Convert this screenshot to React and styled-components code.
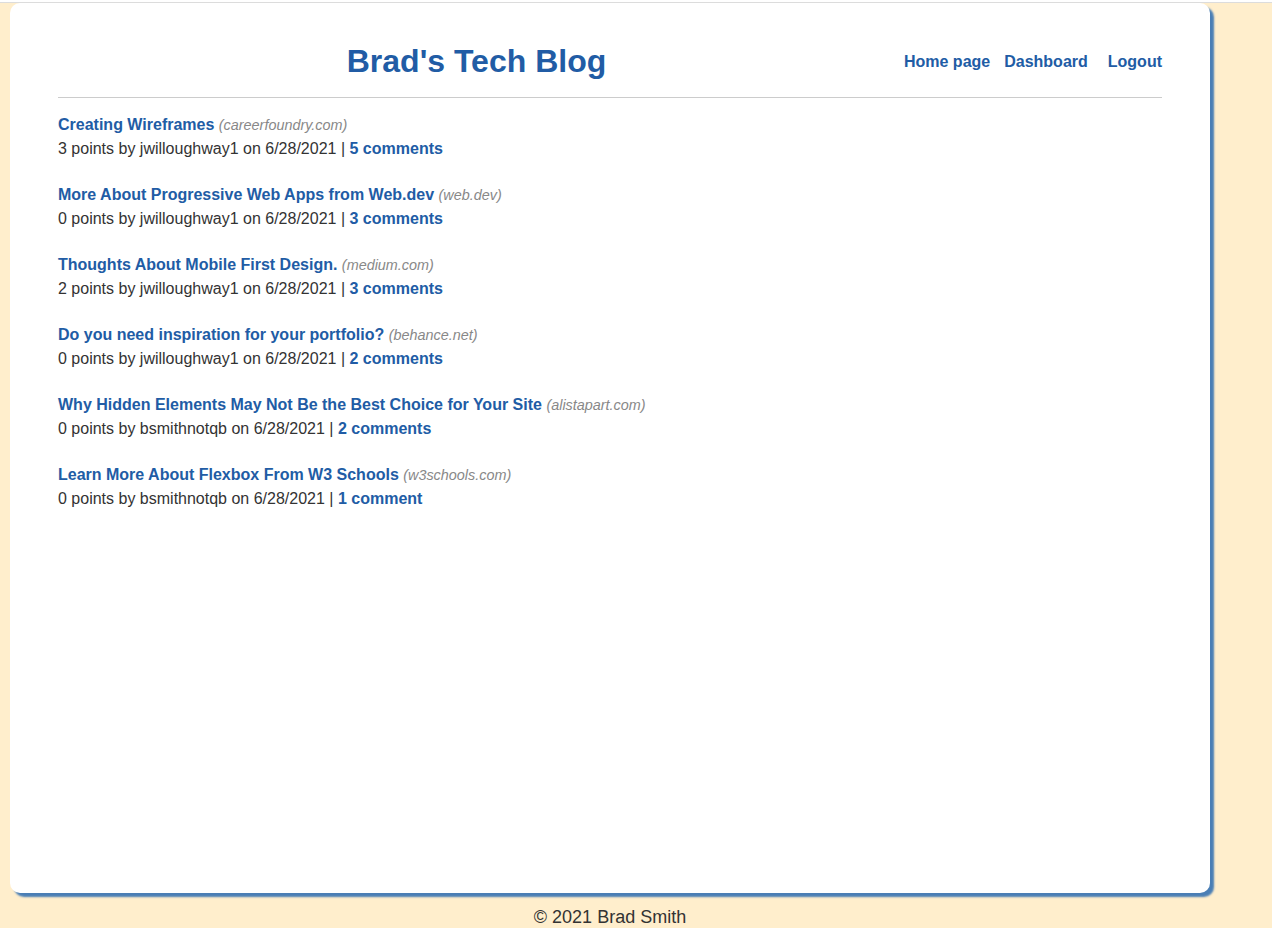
import React from "react";
import styled, { createGlobalStyle } from "styled-components";

const GlobalStyle = createGlobalStyle`
  html, body {
    margin: 0;
    padding: 0;
    background: #ffeecc;
    font-family: "Liberation Sans", Arial, sans-serif;
    color: #333;
  }
`;

const TopRule = styled.div`
  height: 2px;
  background: #ffffff;
  border-bottom: 1px solid #dcdcdc;
`;

const Page = styled.div`
  width: 1200px;
  margin-left: 10px;
`;

const Card = styled.main`
  box-sizing: border-box;
  height: 890px;
  background: #ffffff;
  border-radius: 10px;
  box-shadow: 4px 4px 2px #4a7eb5;
  padding: 0 48px;
`;

const Header = styled.header`
  display: flex;
  align-items: center;
  padding: 40px 0 18px;
  border-bottom: 1px solid #cccccc;
`;

const Title = styled.h1`
  flex: 1;
  margin: 0;
  padding-right: 9px;
  text-align: center;
  font-size: 32px;
  line-height: 36px;
  font-weight: bold;
  color: #215ca5;
`;

const Nav = styled.nav`
  display: flex;
  align-items: center;
  padding-top: 2px;
`;

const NavLink = styled.a`
  font-size: 16px;
  font-weight: bold;
  color: #215ca5;
  text-decoration: none;
  margin-left: ${(p) => p.$gap || 0}px;
`;

const PostList = styled.ul`
  list-style: none;
  margin: 15px 0 0;
  padding: 0;
`;

const Post = styled.li`
  margin-bottom: 22px;
  font-size: 16px;
  line-height: 24px;
`;

const PostTitle = styled.a`
  font-weight: bold;
  color: #215ca5;
  text-decoration: none;
`;

const Domain = styled.span`
  font-size: 14.4px;
  font-style: italic;
  color: #888888;
`;

const Meta = styled.div`
  color: #333333;
`;

const CommentsLink = styled.a`
  font-weight: bold;
  color: #215ca5;
  text-decoration: none;
`;

const Footer = styled.footer`
  text-align: center;
  font-size: 18px;
  line-height: 20px;
  padding: 14px 0 0;
  color: #333333;
`;

const posts = [
  { title: "Creating Wireframes", domain: "careerfoundry.com", points: 3, user: "jwilloughway1", date: "6/28/2021", comments: 5 },
  { title: "More About Progressive Web Apps from Web.dev", domain: "web.dev", points: 0, user: "jwilloughway1", date: "6/28/2021", comments: 3 },
  { title: "Thoughts About Mobile First Design.", domain: "medium.com", points: 2, user: "jwilloughway1", date: "6/28/2021", comments: 3 },
  { title: "Do you need inspiration for your portfolio?", domain: "behance.net", points: 0, user: "jwilloughway1", date: "6/28/2021", comments: 2 },
  { title: "Why Hidden Elements May Not Be the Best Choice for Your Site", domain: "alistapart.com", points: 0, user: "bsmithnotqb", date: "6/28/2021", comments: 2 },
  { title: "Learn More About Flexbox From W3 Schools", domain: "w3schools.com", points: 0, user: "bsmithnotqb", date: "6/28/2021", comments: 1 },
];

export default function App() {
  return (
    <>
      <GlobalStyle />
      <TopRule />
      <Page>
        <Card>
          <Header>
            <Title>Brad's Tech Blog</Title>
            <Nav>
              <NavLink href="#">Home page</NavLink>
              <NavLink href="#" $gap={14}>Dashboard</NavLink>
              <NavLink href="#" $gap={20}>Logout</NavLink>
            </Nav>
          </Header>
          <PostList>
            {posts.map((p) => (
              <Post key={p.title}>
                <div>
                  <PostTitle href="#">{p.title}</PostTitle> <Domain>({p.domain})</Domain>
                </div>
                <Meta>
                  {p.points} points by {p.user} on {p.date} |{" "}
                  <CommentsLink href="#">
                    {p.comments} {p.comments === 1 ? "comment" : "comments"}
                  </CommentsLink>
                </Meta>
              </Post>
            ))}
          </PostList>
        </Card>
        <Footer>© 2021 Brad Smith</Footer>
      </Page>
    </>
  );
}
